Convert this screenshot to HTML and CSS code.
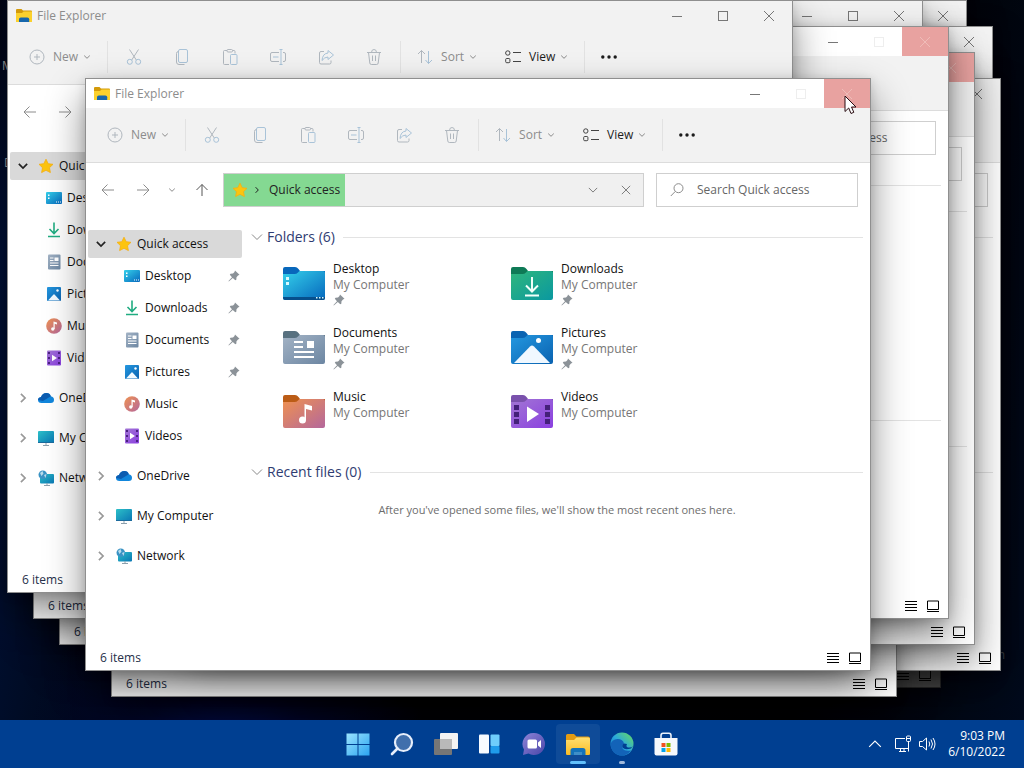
FILE: index.html
```html
<!DOCTYPE html>
<html lang="en">
<head>
    <meta charset="UTF-8">
    <meta name="viewport" content="width=device-width, initial-scale=1.0">
    <title>File Explorer</title>
    <link rel="stylesheet" href="styles.css">
</head>
<body>

<!-- Icon set -->
<svg class="sprite" aria-hidden="true">
    <defs>
        <linearGradient id="g-blue" x1="0" y1="0" x2="1" y2="1"><stop offset="0" stop-color="#35d0ea"/><stop offset="1" stop-color="#0668bd"/></linearGradient>
        <linearGradient id="g-screen" x1="0" y1="0" x2="1" y2="1"><stop offset="0" stop-color="#2cc0c8"/><stop offset="1" stop-color="#0a76b4"/></linearGradient>
        <linearGradient id="g-green" x1="0" y1="0" x2="1" y2="1"><stop offset="0" stop-color="#2fb67c"/><stop offset="1" stop-color="#0a98a0"/></linearGradient>
        <linearGradient id="g-grey" x1="0" y1="0" x2="1" y2="1"><stop offset="0" stop-color="#a3b3c5"/><stop offset="1" stop-color="#6c86a2"/></linearGradient>
        <linearGradient id="g-pic" x1="0" y1="0" x2="1" y2="1"><stop offset="0" stop-color="#2498e0"/><stop offset="1" stop-color="#0a62b0"/></linearGradient>
        <linearGradient id="g-music" x1="0" y1="0" x2="1" y2="1"><stop offset="0" stop-color="#ef9250"/><stop offset="1" stop-color="#b4679c"/></linearGradient>
        <linearGradient id="g-video" x1="0" y1="0" x2="1" y2="1"><stop offset="0" stop-color="#a276d4"/><stop offset="1" stop-color="#8a3fe0"/></linearGradient>
        <linearGradient id="g-win" x1="0" y1="0" x2="1" y2="1"><stop offset="0" stop-color="#9be4ff"/><stop offset="1" stop-color="#2ba4f0"/></linearGradient>
        <linearGradient id="g-edge" x1="0" y1="1" x2="1" y2="0"><stop offset="0" stop-color="#0c64c0"/><stop offset=".5" stop-color="#2ba9dc"/><stop offset="1" stop-color="#6ade58"/></linearGradient>
        <linearGradient id="g-yellow" x1="0" y1="0" x2="0" y2="1"><stop offset="0" stop-color="#ffdf70"/><stop offset="1" stop-color="#fbbc24"/></linearGradient>
        <linearGradient id="g-chat" x1="0" y1="0" x2="1" y2="1"><stop offset="0" stop-color="#8d84d8"/><stop offset="1" stop-color="#4a46a8"/></linearGradient>
    </defs>

    <symbol id="i-explorer" viewBox="0 0 16 16"><path d="M0 2.2Q0 1 1 1h4.5L7 2.6h8q1 0 1 1V14H0z" fill="#d39a0a"/><path d="M0 5h6l1.6-1.4H16V14H0z" fill="#fbd12d"/><path d="M3 14V11.2Q3 9.4 4.8 9.4h6.600q1.800 0 1.800 1.800V14z" fill="#1767ac"/></symbol>
    <symbol id="i-down" viewBox="0 0 8 8"><path d="M1.200 2.600 4 5.300 6.800 2.600" class="line"/></symbol>
    <symbol id="i-chev" viewBox="0 0 12 12"><path d="M1 3.500 6 8.500 11 3.500" class="line"/></symbol>
    <symbol id="i-new" viewBox="0 0 16 16"><circle cx="8" cy="8" r="7" class="line"/><path d="M8 5v6M5 8h6" class="line"/></symbol>
    <symbol id="i-cut" viewBox="0 0 16 16"><path d="M3.500 0.500 10.300 11M12.500 0.500 5.700 11" class="line"/><circle cx="3.800" cy="12.800" r="2.500" class="line tint"/><circle cx="12.200" cy="12.800" r="2.500" class="line tint"/></symbol>
    <symbol id="i-copy" viewBox="0 0 16 16"><rect x="4.500" y="0.500" width="9" height="13" rx="1.500" class="line tint"/><path d="M4.500 2.500Q2.500 2.500 2.500 4.500v8.500q0 2.500 2.500 2.500h5.500" class="line"/></symbol>
    <symbol id="i-paste" viewBox="0 0 16 16"><path d="M7 15.500H2.500q-1 0-1-1v-12q0-1 1-1H5M10.500 1.500H12q1 0 1 1v2" class="line"/><rect x="5" y="0.500" width="5.500" height="2.500" rx="1" class="line"/><rect x="8.500" y="5.500" width="6.500" height="10" rx="1" class="line tint"/></symbol>
    <symbol id="i-rename" viewBox="0 0 16 16"><path d="M9 12.500H2q-1.500 0-1.500-1.500V5Q.500 3.500 2 3.500h7M13 3.500h1q1.500 0 1.500 1.500v6q0 1.500-1.500 1.500h-1" class="line"/><path d="M11 0.500v15M9.500 0.500h3M9.500 15.500h3M3 8h5.500" class="line tint"/></symbol>
    <symbol id="i-share" viewBox="0 0 16 16"><path d="M6 2.500H3Q1.500 2.500 1.500 4v9.500Q1.500 15 3 15h8.500q1.500 0 1.500-1.500V11.500" class="line"/><path d="M10 1.500 15.500 6 10 10.500V8Q6.500 8 4 11.500 4.500 4.500 10 4z" class="line tint"/></symbol>
    <symbol id="i-delete" viewBox="0 0 16 16"><path d="M1 3.500h14M5.500 3.500Q5.500.500 8 .500t2.500 3M2.500 3.500 3.800 14q.200 1.500 1.500 1.500h5.400q1.300 0 1.500-1.500L13.500 3.500M6.500 6.500v5.500M9.500 6.500v5.500" class="line"/></symbol>
    <symbol id="i-sort" viewBox="0 0 16 16"><path d="M4.500 14V1.500M1 5 4.500 1.500 8 5" class="line"/><path d="M11.500 2v12.500M8.500 11l3 3.500 3.500-3.500" class="line tint"/></symbol>
    <symbol id="i-view" viewBox="0 0 16 16"><circle cx="2.800" cy="4" r="2.200" class="line"/><rect x="0.700" y="9.500" width="4.200" height="4.200" rx="1" class="line"/><path d="M8 3.500h8.500M8 12.500h8.500" class="line"/></symbol>
    <symbol id="i-more" viewBox="0 0 16 16"><circle cx="1.800" cy="8" r="1.700"/><circle cx="8" cy="8" r="1.700"/><circle cx="14.200" cy="8" r="1.700"/></symbol>
    <symbol id="i-back" viewBox="0 0 16 16"><path d="M14 8H2.500M7.500 2.500 2 8l5.500 5.500" class="line"/></symbol>
    <symbol id="i-fwd" viewBox="0 0 16 16"><path d="M2 8h11.500M8.500 2.500 14 8l-5.500 5.500" class="line"/></symbol>
    <symbol id="i-up" viewBox="0 0 16 16"><path d="M8 14V2.500M2.500 8 8 2.500 13.500 8" class="line"/></symbol>
    <symbol id="i-x" viewBox="0 0 12 12"><path d="M1 1l10 10M11 1 1 11" class="line"/></symbol>
    <symbol id="i-min" viewBox="0 0 12 12"><path d="M1 6.500h10" class="line"/></symbol>
    <symbol id="i-max" viewBox="0 0 12 12"><rect x="1.500" y="1.500" width="9" height="9" class="line"/></symbol>
    <symbol id="i-search" viewBox="0 0 16 16"><circle cx="9.500" cy="6.200" r="4.500" class="line"/><path d="M6.300 9.400 1.800 14" class="line"/></symbol>
    <symbol id="i-pin" viewBox="0 0 12 12"><path d="M7 .500 11.500 4.800 10 5.500 8.500 7.300 8.300 9.800 7.300 10.300 4.800 8 .800 11.500.500 11 4 7.200 1.800 4.800 2.500 3.800 5 3.500 6.500 2z"/></symbol>
    <symbol id="i-star" viewBox="0 0 16 16"><path d="M8 1.200 10.200 5.700 15 6.300 11.500 9.700 12.400 14.600 8 12.300 3.600 14.600 4.500 9.700 1 6.300 5.800 5.700z" fill="#fcc40f" stroke="#f5ae12" stroke-width=".8"/></symbol>

    <symbol id="s-desktop" viewBox="0 0 16 16"><rect y="2" width="16" height="12" rx="1" fill="url(#g-blue)"/><path d="M2 4.500h1.500v1.500H2zM2 7.500h1.500V9H2zM10 11.500h1v1h-1zM12 11.500h1v1h-1zM14 11.500h1v1h-1z" fill="#fff"/></symbol>
    <symbol id="s-downloads" viewBox="0 0 16 16"><path d="M8 .500v11M3.500 7 8 11.500 12.500 7M2 14.500h12" fill="none" stroke="#20ac81" stroke-width="1.600"/></symbol>
    <symbol id="s-documents" viewBox="0 0 16 16"><rect x="2" y=".500" width="12.500" height="15" rx="1" fill="url(#g-grey)"/><path d="M4 4h3.500M4 6.500h3.500M4 9h8.500M4 11.500h8.500" stroke="#fff"/><path d="M8.500 3.500h4v3.500h-4z" fill="#fff"/></symbol>
    <symbol id="s-pictures" viewBox="0 0 16 16"><rect x="1" y="1" width="14" height="14" rx="1" fill="url(#g-pic)"/><path d="M2 14.500 7.500 8.500q.500-.500 1 0L14 14.500z" fill="#f2f9ff"/><circle cx="11.500" cy="4.500" r="1.200" fill="#fff"/></symbol>
    <symbol id="s-music" viewBox="0 0 16 16"><circle cx="8" cy="8" r="7.800" fill="url(#g-music)"/><circle cx="6.800" cy="11" r="1.700" fill="#fff"/><path d="M7.500 11V3.500l3.500 1v2L8.700 5.800V11z" fill="#fff"/></symbol>
    <symbol id="s-videos" viewBox="0 0 16 16"><rect x="1" y=".500" width="14" height="15" rx="1" fill="url(#g-video)"/><path d="M2 2h2v2H2zM2 7h2v2H2zM2 12h2v2H2zM12 2h2v2h-2zM12 7h2v2h-2zM12 12h2v2h-2z" fill="#4a2280"/><path d="M6 4.800 11 8 6 11.200z" fill="#fff"/></symbol>
    <symbol id="s-onedrive" viewBox="0 0 16 16"><path d="M3.500 13Q0 13 0 10q0-2.500 3-3Q4.500 3 8.500 3q3.200 0 4.300 3.200Q16 6.800 16 9.800 16 13 12.800 13z" fill="#1186dc"/><path d="M0 10q0-2.500 3-3Q4.500 3 8.500 3q3.200 0 4.300 3.200L5 11z" fill="#0c5cb0"/></symbol>
    <symbol id="s-computer" viewBox="0 0 16 16"><rect y="1" width="16" height="12" rx="1" fill="url(#g-screen)"/><path d="M0 12.500h16" stroke="#1c6b9d"/><path d="M8 13v2M5 15.500h6" stroke="#8da0ad"/></symbol>
    <symbol id="s-network" viewBox="0 0 16 16"><rect x="2" y="4" width="14" height="9.500" rx="1" fill="url(#g-screen)"/><path d="M9 13v2M6 15.500h6" stroke="#8da0ad"/><circle cx="4.800" cy="4.800" r="4.300" fill="#3a93c4"/><path d="M2 3 4.500 1l1 2.500L3.500 6zM6 5l2.500-1-1 4z" fill="#b9dcec"/></symbol>

    <symbol id="f-desktop" viewBox="0 0 42 33"><path d="M0 2Q0 0 2 0h10q2 0 3.500 2L17 4H42v8H0z" fill="#0867bb"/><path d="M0 7h11.500q2 0 3.500-1.500L16.500 4H40q2 0 2 2V31q0 2-2 2H2q-2 0-2-2z" fill="url(#g-blue)"/><path d="M0 30h42v1q0 2-2 2H2q-2 0-2-2z" fill="#064f8c"/><path d="M3 10h3v3H3zM3 15h3v3H3zM33 30h1.500v1.500H33zM36 30h1.500v1.500H36zM39 30h1.500v1.500H39z" fill="#d9fbff"/></symbol>
    <symbol id="f-downloads" viewBox="0 0 42 33"><path d="M0 2Q0 0 2 0h10q2 0 3.500 2L17 4H42v8H0z" fill="#0e7a56"/><path d="M0 7h11.500q2 0 3.500-1.500L16.500 4H40q2 0 2 2V31q0 2-2 2H2q-2 0-2-2z" fill="url(#g-green)"/><path d="M21 10v14M15 18.500l6 6 6-6M14 28.500h14" fill="none" stroke="#f2fff9" stroke-width="2"/></symbol>
    <symbol id="f-documents" viewBox="0 0 42 33"><path d="M0 2Q0 0 2 0h10q2 0 3.500 2L17 4H42v8H0z" fill="#587180"/><path d="M0 7h11.500q2 0 3.500-1.500L16.500 4H40q2 0 2 2V31q0 2-2 2H2q-2 0-2-2z" fill="url(#g-grey)"/><path d="M11 11h9M11 16h9M11 21h20M11 26h20" stroke="#fff" stroke-width="2"/><path d="M24 10h7v7h-7z" fill="#fff"/></symbol>
    <symbol id="f-pictures" viewBox="0 0 42 33"><path d="M0 2Q0 0 2 0h10q2 0 3.500 2L17 4H42v8H0z" fill="#0b64b2"/><path d="M0 7h11.500q2 0 3.500-1.500L16.500 4H40q2 0 2 2V31q0 2-2 2H2q-2 0-2-2z" fill="url(#g-pic)"/><path d="M3 32 19 15.500q2-2 4 0L39 32z" fill="#f0f8ff"/><circle cx="27.500" cy="9.500" r="2.500" fill="#fff"/></symbol>
    <symbol id="f-music" viewBox="0 0 42 33"><path d="M0 2Q0 0 2 0h10q2 0 3.500 2L17 4H42v8H0z" fill="#bb5c16"/><path d="M0 7h11.500q2 0 3.500-1.500L16.500 4H40q2 0 2 2V31q0 2-2 2H2q-2 0-2-2z" fill="url(#g-music)"/><circle cx="19.500" cy="25" r="3.500" fill="#fff"/><path d="M21.500 25V9l7.500 2v4.500L23 14v11z" fill="#fff"/></symbol>
    <symbol id="f-videos" viewBox="0 0 42 33"><path d="M0 2Q0 0 2 0h10q2 0 3.500 2L17 4H42v8H0z" fill="#7a51ac"/><path d="M0 7h11.500q2 0 3.500-1.500L16.500 4H40q2 0 2 2V31q0 2-2 2H2q-2 0-2-2z" fill="url(#g-video)"/><path d="M3 10h5v5H3zM3 17h5v5H3zM3 24h5v5H3zM34 10h5v5h-5zM34 17h5v5h-5zM34 24h5v5h-5z" fill="#44207a"/><path d="M16 11.500 28 19 16 27z" fill="#fff"/></symbol>

    <symbol id="t-start" viewBox="0 0 24 24"><path d="M.500 1.500h11v10.500H.500zM12.500 1.500h11v10.500h-11zM.500 13h11v10.500H.500zM12.500 13h11v10.500h-11z" fill="url(#g-win)"/></symbol>
    <symbol id="t-search" viewBox="0 0 24 24"><circle cx="13.500" cy="10.500" r="8.500" fill="#fff" fill-opacity=".25" stroke="#e6eefb" stroke-width="2.200"/><path d="M7.500 16.500 2 22" stroke="#e6eefb" stroke-width="2.600" stroke-linecap="round"/></symbol>
    <symbol id="t-tasks" viewBox="0 0 24 24"><rect x="6" y="1" width="18" height="16" rx="1" fill="#f3f3f3"/><rect y="7" width="18" height="16" rx="1" fill="#767676"/><path d="M6 7h12v10H6z" fill="#b9b9b9"/></symbol>
    <symbol id="t-widgets" viewBox="0 0 24 24"><rect x="1" y="2.500" width="10" height="19" rx="1" fill="#f7fbff"/><rect x="12.500" y="2.500" width="9" height="11.500" rx="1" fill="#6fcdfb"/><rect x="12.500" y="14" width="9" height="7.500" rx="1" fill="#1f9bea"/></symbol>
    <symbol id="t-chat" viewBox="0 0 24 24"><path d="M12 1a11 11 0 1 1-5.500 20.500L1 23l1-5.500A11 11 0 0 1 12 1z" fill="url(#g-chat)"/><rect x="5.500" y="7.500" width="9.500" height="9" rx="1.500" fill="#fff"/><path d="M16 10.500 19 8v8l-3-2.500z" fill="#fff"/></symbol>
    <symbol id="t-explorer" viewBox="0 0 24 24"><path d="M0 3.500Q0 2 1.500 2H8l2.500 2.500H22q2 0 2 2V21q0 2-2 2H2q-2 0-2-2z" fill="#e39b12"/><path d="M0 8h8l2.500-2.500H22.500q1.500 0 1.500 1.500V21.500q0 1.500-1.500 1.500h-21Q0 23 0 21.500z" fill="url(#g-yellow)"/><path d="M4.500 23v-4.500q0-2.500 2.500-2.500h10q2.500 0 2.500 2.500V23h-3.500v-2.500h-8V23z" fill="#1473ba"/><path d="M8 20h8v3H8z" fill="#3f8fc8"/></symbol>
    <symbol id="t-edge" viewBox="0 0 24 24"><circle cx="12" cy="12" r="11.500" fill="url(#g-edge)"/><path d="M.600 12Q2 7.500 7.500 7q5.500 0 6.500 4.500-2 1-2 3.500 1.500 5 9 3.500-4 5.500-10.500 5Q1 22 .600 12z" fill="#1363b8"/><path d="M14 11.500q-2.500 1.500-1.500 4 2.500 3 8.500 1l2-2.500q-1.500 2-5 1.500-2.500-1-1-3.500z" fill="#003f91"/></symbol>
    <symbol id="t-store" viewBox="0 0 24 24"><path d="M7 6V3.500Q7 1.200 9 1.200h6q2 0 2 2.300V6" fill="none" stroke="#e9f1fb" stroke-width="1.600"/><path d="M.500 6h23v15.500q0 2-2 2h-19q-2 0-2-2z" fill="#f5f8fc"/><path d="M7.500 11h4v4h-4z" fill="#f05022"/><path d="M12.500 11h4v4h-4z" fill="#7db902"/><path d="M7.500 16h4v4h-4z" fill="#04a2ea"/><path d="M12.500 16h4v4h-4z" fill="#fdb902"/></symbol>
    <symbol id="t-net" viewBox="0 0 18 18"><path d="M11 3.500H1.500v10H15M5 16.500h7M6.500 13.500v3M10 13.500v3M14.500 7v9.500" class="line"/><rect x="12.500" y="1" width="4" height="5.500" rx="1" class="line"/><path d="M12.500 3.500h4" class="line"/></symbol>
    <symbol id="t-vol" viewBox="0 0 18 18"><path d="M1.500 6.500h3L8.500 3v12L4.500 11.500h-3zM11 6.500q1.500 2.500 0 5M13 4.500q3 4.500 0 9M15 3q4 6 0 12" class="line"/></symbol>
</svg>

<main class="desktop">
    <span class="desktop-label label-computer">My Co</span>
    <span class="desktop-label label-documents">Docs</span>
    <span class="desktop-label label-bin">Bin</span>

    <svg class="cursor" viewBox="0 0 13 20" aria-hidden="true"><path d="M1 1v15.500l3.700-3.500 2.300 5.500 2.800-1.200L7.500 12H12z" fill="#fff" stroke="#2a0d12"/></svg>
</main>

<footer class="taskbar">
    <nav class="pinned" aria-label="Taskbar">
        <button class="task" aria-label="Start"><svg><use href="#t-start"/></svg></button>
        <button class="task" aria-label="Search"><svg><use href="#t-search"/></svg></button>
        <button class="task" aria-label="Task View"><svg><use href="#t-tasks"/></svg></button>
        <button class="task" aria-label="Widgets"><svg><use href="#t-widgets"/></svg></button>
        <button class="task" aria-label="Chat"><svg><use href="#t-chat"/></svg></button>
        <button class="task active" aria-label="File Explorer"><svg><use href="#t-explorer"/></svg></button>
        <button class="task running" aria-label="Edge"><svg><use href="#t-edge"/></svg></button>
        <button class="task" aria-label="Store"><svg><use href="#t-store"/></svg></button>
    </nav>
    <div class="tray">
        <button class="tray-chevron" aria-label="Show hidden icons"><svg><use href="#i-chev"/></svg></button>
        <button class="tray-icons" aria-label="Network and volume"><svg><use href="#t-net"/></svg><svg><use href="#t-vol"/></svg></button>
        <button class="clock"><time>9:03 PM</time><time>6/10/2022</time></button>
    </div>
</footer>

<!-- One explorer window -->
<template id="window-template">
    <section class="window" aria-label="File Explorer">
        <header class="titlebar">
            <svg class="icon"><use href="#i-explorer"/></svg>
            <span class="title">File Explorer</span>
            <button class="caption" aria-label="Minimize"><svg><use href="#i-min"/></svg></button>
            <button class="caption maximize" aria-label="Maximize"><svg><use href="#i-max"/></svg></button>
            <button class="caption close" aria-label="Close"><svg><use href="#i-x"/></svg></button>
        </header>

        <div class="toolbar">
            <button class="command"><svg class="icon"><use href="#i-new"/></svg><span>New</span><svg class="small"><use href="#i-down"/></svg></button>
            <i class="separator"></i>
            <button class="tool" aria-label="Cut"><svg class="icon"><use href="#i-cut"/></svg></button>
            <button class="tool" aria-label="Copy"><svg class="icon"><use href="#i-copy"/></svg></button>
            <button class="tool" aria-label="Paste"><svg class="icon"><use href="#i-paste"/></svg></button>
            <button class="tool" aria-label="Rename"><svg class="icon"><use href="#i-rename"/></svg></button>
            <button class="tool" aria-label="Share"><svg class="icon"><use href="#i-share"/></svg></button>
            <button class="tool" aria-label="Delete"><svg class="icon"><use href="#i-delete"/></svg></button>
            <i class="separator"></i>
            <button class="command"><svg class="icon"><use href="#i-sort"/></svg><span>Sort</span><svg class="small"><use href="#i-down"/></svg></button>
            <button class="command enabled"><svg class="icon"><use href="#i-view"/></svg><span>View</span><svg class="small"><use href="#i-down"/></svg></button>
            <i class="separator"></i>
            <button class="tool more" aria-label="More"><svg class="icon"><use href="#i-more"/></svg></button>
        </div>

        <div class="navigation">
            <button class="nav-button" aria-label="Back"><svg class="icon"><use href="#i-back"/></svg></button>
            <button class="nav-button" aria-label="Forward"><svg class="icon"><use href="#i-fwd"/></svg></button>
            <button class="nav-button narrow" aria-label="Recent locations"><svg class="small"><use href="#i-down"/></svg></button>
            <button class="nav-button dark" aria-label="Up"><svg class="icon"><use href="#i-up"/></svg></button>
            <div class="address">
                <div class="crumbs">
                    <svg class="icon"><use href="#i-star"/></svg>
                    <svg class="small turned"><use href="#i-down"/></svg>
                    <a href="#">Quick access</a>
                </div>
                <button class="address-button" aria-label="Previous locations"><svg class="small-x"><use href="#i-chev"/></svg></button>
                <button class="address-button" aria-label="Stop"><svg class="small-x"><use href="#i-x"/></svg></button>
            </div>
            <label class="search">
                <svg class="icon"><use href="#i-search"/></svg>
                <input type="text" placeholder="Search Quick access" aria-label="Search Quick access">
            </label>
        </div>

        <div class="content">
            <nav class="sidebar">
                <a href="#" class="root selected"><svg class="arrow open"><use href="#i-chev"/></svg><svg class="icon"><use href="#i-star"/></svg>Quick access</a>
                <a href="#" class="child"><svg class="icon"><use href="#s-desktop"/></svg>Desktop<svg class="pin"><use href="#i-pin"/></svg></a>
                <a href="#" class="child"><svg class="icon"><use href="#s-downloads"/></svg>Downloads<svg class="pin"><use href="#i-pin"/></svg></a>
                <a href="#" class="child"><svg class="icon"><use href="#s-documents"/></svg>Documents<svg class="pin"><use href="#i-pin"/></svg></a>
                <a href="#" class="child"><svg class="icon"><use href="#s-pictures"/></svg>Pictures<svg class="pin"><use href="#i-pin"/></svg></a>
                <a href="#" class="child"><svg class="icon"><use href="#s-music"/></svg>Music</a>
                <a href="#" class="child"><svg class="icon"><use href="#s-videos"/></svg>Videos</a>
                <a href="#" class="root"><svg class="arrow"><use href="#i-chev"/></svg><svg class="icon"><use href="#s-onedrive"/></svg>OneDrive</a>
                <a href="#" class="root"><svg class="arrow"><use href="#i-chev"/></svg><svg class="icon"><use href="#s-computer"/></svg>My Computer</a>
                <a href="#" class="root"><svg class="arrow"><use href="#i-chev"/></svg><svg class="icon"><use href="#s-network"/></svg>Network</a>
            </nav>

            <div class="files">
                <h2><svg><use href="#i-chev"/></svg><span>Folders (6)</span></h2>
                <ul class="folders">
                    <li><svg class="folder"><use href="#f-desktop"/></svg><div><b>Desktop</b><span>My Computer</span><svg class="pin"><use href="#i-pin"/></svg></div></li>
                    <li><svg class="folder"><use href="#f-downloads"/></svg><div><b>Downloads</b><span>My Computer</span><svg class="pin"><use href="#i-pin"/></svg></div></li>
                    <li><svg class="folder"><use href="#f-documents"/></svg><div><b>Documents</b><span>My Computer</span><svg class="pin"><use href="#i-pin"/></svg></div></li>
                    <li><svg class="folder"><use href="#f-pictures"/></svg><div><b>Pictures</b><span>My Computer</span><svg class="pin"><use href="#i-pin"/></svg></div></li>
                    <li><svg class="folder"><use href="#f-music"/></svg><div><b>Music</b><span>My Computer</span></div></li>
                    <li><svg class="folder"><use href="#f-videos"/></svg><div><b>Videos</b><span>My Computer</span></div></li>
                </ul>
                <h2><svg><use href="#i-chev"/></svg><span>Recent files (0)</span></h2>
                <p class="empty">After you've opened some files, we'll show the most recent ones here.</p>
            </div>
        </div>

        <footer class="statusbar">
            <span class="count">6 items</span>
            <button class="layout" aria-label="Details"><svg viewBox="0 0 12 12"><path d="M0 1.500h12M0 4.500h12M0 7.500h12M0 10.500h12" class="line"/></svg></button>
            <button class="layout" aria-label="Large icons"><svg viewBox="0 0 12 12"><path d="M.500 1h11v8.500H.500zM0 11.500h12" class="line"/></svg></button>
        </footer>
    </section>
</template>

<script src="script.js"></script>
</body>
</html>
```

FILE: styles.css
```css
* {
    box-sizing: border-box;
}

body, html {
    height: 100%;
    margin: 0;
}

body {
    display: flex;
    flex-direction: column;
    overflow: hidden;
    font-family: "Open Sans", "Noto Sans", sans-serif;
    font-size: 12px;
    line-height: 16px;
    color: #111;
}

button {
    display: flex;
    align-items: center;
    justify-content: center;
    padding: 0;
    border: 0;
    background: none;
    font: inherit;
    color: inherit;
}

a {
    color: inherit;
    text-decoration: none;
}

svg {
    flex: none;
    fill: currentColor;
}

.sprite {
    position: absolute;
    width: 0;
    height: 0;
}

.line {
    fill: none;
    stroke: currentColor;
}

.icon {
    width: 16px;
    height: 16px;
}

.small {
    width: 8px;
    height: 8px;
}

.small-x {
    width: 10px;
    height: 10px;
}

.pin {
    width: 12px;
    height: 12px;
    color: #8b9298;
}

/* Desktop */
.desktop {
    position: relative;
    flex: 1;
    overflow: hidden;
    background: radial-gradient(ellipse at 22% 106%, #000f5c 0, #00072c 8%, transparent 18%), linear-gradient(100deg, #010513 0, #00123a 4%, #000308 25%, #000205 80%, #010a1c 100%);
}

.desktop-label {
    position: absolute;
    color: #a9abb0;
}

.label-computer {
    left: 2px;
    top: 58px;
}

.label-documents {
    left: 4px;
    top: 155px;
}

.label-bin {
    right: 19px;
    top: 647px;
    color: #44474d;
}

.cursor {
    position: absolute;
    z-index: 2;
    left: 844px;
    top: 95px;
    width: 13px;
    height: 20px;
}

/* Windows */
.window {
    position: absolute;
    display: flex;
    flex-direction: column;
    width: 786px;
    min-height: 593px;
    border: 1px solid #8f8f8f;
    background: #fff;
    box-shadow: 0 18px 36px rgba(0, 0, 0, 0.46), 0 2px 10px rgba(0, 0, 0, 0.14);
}

/* covered windows only draw the texts that stick out */
.behind .title,
.behind .command span,
.behind .crumbs,
.behind .search input,
.behind .sidebar,
.behind h2 span,
.behind .folders,
.behind .empty,
.behind .count {
    visibility: hidden;
}

.shows-header .title,
.shows-header .command span,
.shows-header .sidebar,
.shows-count .count,
.shows-search .search input {
    visibility: visible;
}

.dim {
    filter: brightness(0.3);
}

.titlebar {
    display: flex;
    align-items: center;
    height: 29px;
    padding-left: 8px;
    background: #f2f2f2;
    color: #8c8c8c;
}

.title {
    flex: 1;
    padding-left: 5px;
}

.caption {
    width: 46px;
    height: 29px;
    color: #777;
}

.caption svg {
    width: 12px;
    height: 12px;
}

.hovered .titlebar {
    background: #fff;
}

.hovered .maximize {
    color: #eee;
}

.hovered .close {
    background: #e8a2a0;
    color: #efbcb8;
}

/* Toolbar */
.toolbar {
    display: flex;
    align-items: center;
    height: 55px;
    padding-left: 7px;
    border-bottom: 1px solid #dcdcdc;
    background: #f2f2f2;
    color: #8f9499;
}

.command {
    height: 32px;
    padding: 0 14px;
    gap: 8px;
    color: #8c8c8c;
}

.command .small {
    margin-left: -3px;
}

.command .icon,
.tool .icon {
    overflow: visible;
    color: #b0b7be;
}

.tint {
    stroke: #a9c3d8;
}

.tool {
    width: 48px;
    height: 32px;
}

.tool.more {
    width: 44px;
}

.command.enabled,
.more .icon {
    color: #1c1c1c;
}

.command.enabled .icon {
    color: #444;
}

.command.enabled .small {
    color: #888;
}

.separator {
    width: 1px;
    height: 32px;
    margin: 0 2px;
    background: #e2e2e2;
}

/* Address and search */
.navigation {
    display: flex;
    align-items: center;
    padding: 10px 12px 10px 4px;
    color: #8c8c8c;
}

.nav-button {
    width: 35px;
    height: 34px;
}

.nav-button.narrow {
    width: 24px;
}

.nav-button.dark {
    color: #555;
}

.address {
    display: flex;
    flex: 1;
    height: 34px;
    margin: 0 12px 0 4px;
    padding-right: 1px;
    border: 1px solid #cfcfcf;
    background: #f0f0f0;
    color: #666;
}

.crumbs {
    display: flex;
    align-items: center;
    padding: 0 5px 0 8px;
    background: #84d992;
    color: #222;
}

.crumbs .turned {
    margin: 0 8px 0 5px;
    transform: rotate(-90deg);
}

.address-button {
    width: 33px;
}

.crumbs + .address-button {
    margin-left: auto;
}

.search {
    display: flex;
    align-items: center;
    width: 202px;
    height: 34px;
    padding-left: 12px;
    gap: 12px;
    border: 1px solid #cfcfcf;
}

.search input {
    flex: 1;
    min-width: 0;
    padding: 0;
    border: 0;
    outline: 0;
    background: none;
    font: inherit;
}

.search input::placeholder {
    color: #666;
}

/* Sidebar */
.content {
    display: flex;
    flex: 1;
}

.sidebar {
    display: flex;
    flex-direction: column;
    gap: 4px;
    width: 157px;
    padding: 13px 1px 0 2px;
}

.sidebar a {
    display: flex;
    align-items: center;
    height: 28px;
    gap: 5px;
}

.sidebar .root {
    padding-left: 8px;
}

.sidebar .root:not(.selected) {
    margin-top: 8px;
}

.sidebar .selected {
    border-radius: 2px;
    background: #d9d9d9;
}

.arrow {
    width: 10px;
    height: 10px;
    margin-right: 5px;
    stroke-width: 2px;
    color: #999;
    transform: rotate(-90deg);
}

.arrow.open {
    color: #222;
    transform: none;
}

.sidebar .child {
    padding-left: 36px;
}

.sidebar .pin {
    margin-left: auto;
    margin-right: 2px;
}

/* File list */
.files {
    flex: 1;
    padding: 10px 7px 0 8px;
}

h2 {
    display: flex;
    align-items: center;
    gap: 4px;
    margin: 0;
    font-size: 14px;
    font-weight: normal;
    line-height: 20px;
    color: #2f3c72;
}

h2 svg {
    width: 12px;
    height: 12px;
    color: #888;
}

h2::after {
    content: "";
    flex: 1;
    height: 1px;
    margin-left: 4px;
    background: #e3e3e3;
}

.folders {
    display: grid;
    grid-template-columns: 228px 228px;
    grid-auto-rows: 64px;
    margin: 0;
    padding: 14px 0 9px 32px;
    list-style: none;
}

.folders li {
    display: flex;
    gap: 8px;
}

.folder {
    width: 42px;
    height: 33px;
    margin-top: 6px;
}

.folders b,
.folders span {
    display: block;
    font-weight: normal;
}

.folders span {
    color: #767676;
}

.folders .pin {
    display: block;
    margin-top: 1px;
}

.empty {
    margin: 20px 0 0;
    font-size: 11px;
    text-align: center;
    color: #6d6d6d;
}

/* Status bar */
.statusbar {
    display: flex;
    align-items: center;
    height: 24px;
    padding: 0 4px 0 14px;
    color: #26304a;
}

.count {
    flex: 1;
}

.layout {
    width: 22px;
    height: 22px;
    color: #000;
}

.layout svg {
    width: 12px;
    height: 12px;
}

/* Taskbar */
.taskbar {
    display: grid;
    grid-template-columns: 1fr auto 1fr;
    align-items: center;
    height: 48px;
    background: #003f91;
    color: #fff;
}

.pinned {
    display: flex;
    grid-column: 2;
}

.task {
    position: relative;
    width: 44px;
    height: 40px;
}

.task svg {
    width: 24px;
    height: 24px;
}

.task.active {
    border-radius: 4px;
    background: #0f4b98;
}

.task.active::after,
.task.running::after {
    content: "";
    position: absolute;
    bottom: 0;
    width: 6px;
    height: 3px;
    border-radius: 2px;
    background: #9fb9dc;
}

.task.active::after {
    width: 16px;
    background: #62c0fb;
}

.tray {
    display: flex;
    align-items: center;
    justify-content: flex-end;
    padding-right: 19px;
}

.tray-chevron svg {
    width: 14px;
    height: 14px;
    transform: rotate(180deg);
}

.tray-icons {
    gap: 6px;
    margin: 0 12px;
}

.tray-icons svg {
    width: 18px;
    height: 18px;
}

.clock {
    flex-direction: column;
    align-items: flex-end;
}
```

FILE: script.js
```javascript
// open windows, from the back of the stack to the front
const windows = [
    { left: 155, top: 95, state: 'behind dim' },
    { left: 181, top: 0, state: 'behind' },
    { left: 207, top: 26, state: 'behind' },
    { left: 215, top: 78, state: 'behind' },
    { left: 111, top: 104, state: 'behind shows-count' },
    { left: 59, top: 52, state: 'behind shows-count' },
    { left: 33, top: 26, state: 'behind shows-count' },
    { left: 189, top: 52, state: 'behind hovered' },
    { left: 137, top: 0, state: 'behind' },
    { left: 163, top: 26, state: 'behind hovered shows-search' },
    { left: 7, top: 0, state: 'behind shows-header shows-count' },
    { left: 85, top: 78, state: 'hovered' }
];

const desktop = document.querySelector('.desktop');
const template = document.getElementById('window-template');

windows.forEach(({ left, top, state }) => {
    const el = template.content.firstElementChild.cloneNode(true);
    el.style.left = left + 'px';
    el.style.top = top + 'px';
    el.className += ' ' + state;
    desktop.appendChild(el);
});
```
